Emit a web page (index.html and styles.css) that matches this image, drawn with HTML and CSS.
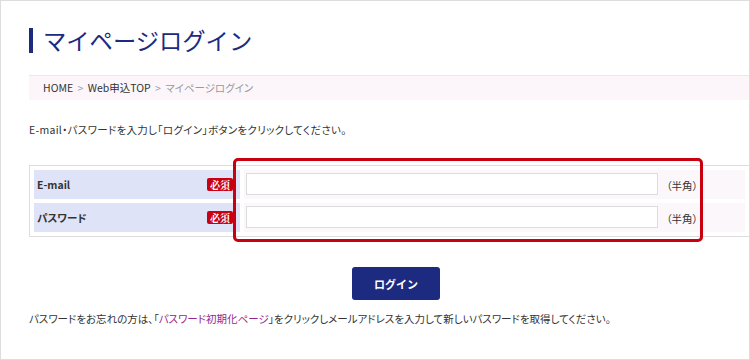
FILE: index.html
```html
<!DOCTYPE html>
<html lang="ja">
<head>
    <meta charset="UTF-8">
    <meta name="viewport" content="width=device-width, initial-scale=1.0">
    <title>マイページログイン</title>
    <link rel="stylesheet" href="styles.css">
</head>
<body>
    <div class="frame">
        <h1 class="page-title">マイページログイン</h1>

        <div class="breadcrumb">
            <a href="#">HOME</a>
            <span class="sep">&gt;</span>
            <a href="#">Web申込TOP</a>
            <span class="sep">&gt;</span>
            <span class="current">マイページログイン</span>
        </div>

        <p class="lead">E-mail・パスワードを入力し「ログイン」ボタンをクリックしてください。</p>

        <table class="login-table">
            <tr>
                <th>
                    <div class="th-inner">
                        <span>E-mail</span>
                        <span class="required">必須</span>
                    </div>
                </th>
                <td>
                    <input type="text" class="field">
                    <span class="note">（半角）</span>
                </td>
            </tr>
            <tr>
                <th>
                    <div class="th-inner">
                        <span>パスワード</span>
                        <span class="required">必須</span>
                    </div>
                </th>
                <td>
                    <input type="password" class="field">
                    <span class="note">（半角）</span>
                </td>
            </tr>
        </table>

        <div class="highlight"></div>

        <div class="btn-row">
            <button class="btn">ログイン</button>
        </div>

        <p class="forgot">パスワードをお忘れの方は、「<a href="#">パスワード初期化ページ</a>」をクリックしメールアドレスを入力して新しいパスワードを取得してください。</p>
    </div>
</body>
</html>
```

FILE: styles.css
```css
body {
    margin: 0;
    padding: 0;
    font-family: "Noto Sans CJK JP", "Liberation Sans", sans-serif;
    font-feature-settings: "palt";
    color: #333;
    background: #fff;
}
.frame {
    position: relative;
    box-sizing: border-box;
    width: 750px;
    height: 360px;
    border: 1px solid #ddd;
    padding: 27px 0 0 28px;
    overflow: hidden;
}
.page-title {
    margin: 0;
    padding-left: 10px;
    border-left: 4px solid #1c2a80;
    font-size: 23.3px;
    font-weight: normal;
    line-height: 25px;
    color: #1c2a80;
    font-feature-settings: normal;
}
.breadcrumb {
    margin-top: 22px;
    height: 24px;
    border-top: 1px solid #efe6ed;
    background: #fcf6fa;
    padding-left: 14px;
    font-size: 10.5px;
    line-height: 24px;
}
.breadcrumb a {
    color: #333;
    text-decoration: none;
}
.breadcrumb .sep {
    color: #999;
    margin: 0 2px;
}
.breadcrumb .current {
    color: #999;
}
.lead {
    margin: 22px 0 0;
    font-size: 10.5px;
    line-height: 16px;
    letter-spacing: 0.3px;
}
.login-table {
    margin-top: 27px;
    width: 100%;
    border: 1px solid #ddd;
    border-right: none;
    border-spacing: 4px;
    font-size: 10.5px;
}
.login-table th {
    width: 206px;
    height: 29px;
    padding: 0;
    background: #dfe3f7;
    text-align: left;
}
.th-inner {
    display: flex;
    justify-content: space-between;
    align-items: center;
    padding: 0 7px 0 3px;
    font-weight: bold;
    color: #333;
}
.required {
    background: #c8000f;
    color: #fff;
    font-size: 10px;
    line-height: 13px;
    padding: 0 3px;
    border-radius: 2px;
    font-family: "Noto Serif CJK JP", "Noto Sans CJK JP", serif;
}
.login-table td {
    padding: 0 0 0 2px;
    background: #fcf7fa;
    white-space: nowrap;
}
.field {
    box-sizing: border-box;
    width: 412px;
    height: 22px;
    border: 1px solid #ddd;
    background: #fff;
    vertical-align: middle;
    margin: -2px 6px 0 0;
}
.note {
    vertical-align: middle;
}
.highlight {
    position: absolute;
    left: 232px;
    top: 157px;
    box-sizing: border-box;
    width: 470px;
    height: 84px;
    border: 3px solid #c8000f;
    border-radius: 5px;
}
.btn-row {
    margin-top: 30px;
    padding-left: 323px;
}
.btn {
    width: 88px;
    height: 33px;
    border: none;
    border-radius: 3px;
    background: #1c2a80;
    color: #fff;
    font-family: inherit;
    font-size: 11px;
    font-weight: bold;
    cursor: pointer;
}
.forgot {
    margin: 11px 0 0;
    font-size: 10.5px;
    line-height: 16px;
}
.forgot a {
    color: #93278f;
    text-decoration: none;
}
```
